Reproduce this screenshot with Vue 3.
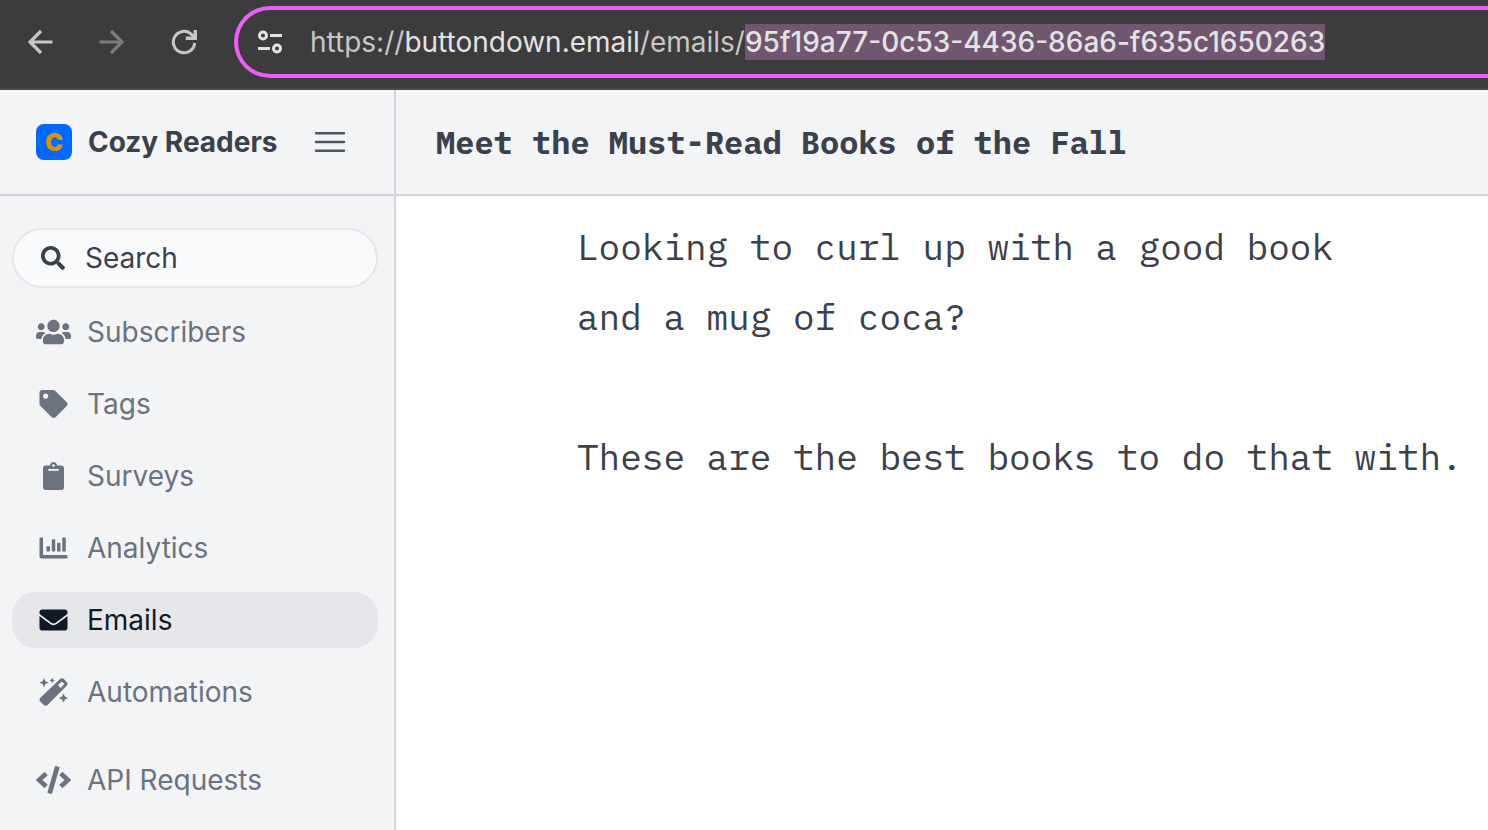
<script setup>
const icons = {
  users: {
    w: 640,
    h: 512,
    d: 'M96 224c35.3 0 64-28.7 64-64s-28.7-64-64-64-64 28.7-64 64 28.7 64 64 64zm448 0c35.3 0 64-28.7 64-64s-28.7-64-64-64-64 28.7-64 64 28.7 64 64 64zm32 32h-64c-17.6 0-33.5 7.1-45.1 18.6 40.3 22.1 68.9 62 75.1 109.4h66c17.7 0 32-14.3 32-32v-32c0-35.3-28.7-64-64-64zm-256 0c61.9 0 112-50.1 112-112S381.9 32 320 32 208 82.1 208 144s50.1 112 112 112zm76.8 32h-8.3c-20.8 10-43.9 16-68.5 16s-47.6-6-68.5-16h-8.3C179.6 288 128 339.6 128 403.2V432c0 26.5 21.5 48 48 48h288c26.5 0 48-21.5 48-48v-28.8c0-63.6-51.6-115.2-115.2-115.2zm-223.7-13.4C161.5 263.1 145.6 256 128 256H64c-35.3 0-64 28.7-64 64v32c0 17.7 14.3 32 32 32h65.9c6.3-47.4 34.9-87.3 75.2-109.4z',
  },
  tag: {
    w: 512,
    h: 512,
    d: 'M0 252.118V48C0 21.49 21.49 0 48 0h204.118a48 48 0 0 1 33.941 14.059l211.882 211.882c18.745 18.745 18.745 49.137 0 67.882L293.823 497.941c-18.745 18.745-49.137 18.745-67.882 0L14.059 286.059A48 48 0 0 1 0 252.118zM112 64c-26.51 0-48 21.49-48 48s21.49 48 48 48 48-21.49 48-48-21.49-48-48-48z',
  },
  clipboard: {
    w: 384,
    h: 512,
    d: 'M384 112v352c0 26.5-21.5 48-48 48H48c-26.5 0-48-21.5-48-48V112c0-26.5 21.5-48 48-48h80c0-35.3 28.7-64 64-64s64 28.7 64 64h80c26.5 0 48 21.5 48 48zM192 40c-13.3 0-24 10.7-24 24s10.7 24 24 24 24-10.7 24-24-10.7-24-24-24m96 114v-20a6 6 0 0 0-6-6H102a6 6 0 0 0-6 6v20a6 6 0 0 0 6 6h180a6 6 0 0 0 6-6z',
  },
  chart: {
    w: 512,
    h: 512,
    d: 'M332.8 320h38.4c6.4 0 12.8-6.4 12.8-12.8V172.8c0-6.4-6.4-12.8-12.8-12.8h-38.4c-6.4 0-12.8 6.4-12.8 12.8v134.4c0 6.4 6.4 12.8 12.8 12.8zm96 0h38.4c6.4 0 12.8-6.4 12.8-12.8V76.8c0-6.4-6.4-12.8-12.8-12.8h-38.4c-6.4 0-12.8 6.4-12.8 12.8v230.4c0 6.4 6.4 12.8 12.8 12.8zm-288 0h38.4c6.4 0 12.8-6.4 12.8-12.8v-70.4c0-6.4-6.4-12.8-12.8-12.8h-38.4c-6.4 0-12.8 6.4-12.8 12.8v70.4c0 6.4 6.4 12.8 12.8 12.8zm96 0h38.4c6.4 0 12.8-6.4 12.8-12.8V108.8c0-6.4-6.4-12.8-12.8-12.8h-38.4c-6.4 0-12.8 6.4-12.8 12.8v198.4c0 6.4 6.4 12.8 12.8 12.8zM496 384H64V80c0-8.84-7.16-16-16-16H16C7.16 64 0 71.16 0 80v336c0 17.67 14.33 32 32 32h464c8.84 0 16-7.16 16-16v-32c0-8.84-7.16-16-16-16z',
  },
  envelope: {
    w: 512,
    h: 512,
    d: 'M502.3 190.8c3.9-3.1 9.7-.2 9.7 4.7V400c0 26.5-21.5 48-48 48H48c-26.5 0-48-21.5-48-48V195.6c0-5 5.7-7.8 9.7-4.7 22.4 17.4 52.1 39.5 154.1 113.6 21.1 15.4 56.7 47.8 92.2 47.6 35.7.3 72-32.8 92.3-47.6 102-74.1 131.6-96.3 154-113.7zM256 320c23.2.4 56.6-29.2 73.4-41.4 132.7-96.3 142.8-104.7 173.4-128.7 5.8-4.5 9.2-11.5 9.2-18.9v-19c0-26.5-21.5-48-48-48H48c-26.5 0-48 21.5-48 48v19c0 7.4 3.4 14.3 9.2 18.9 30.6 23.9 40.7 32.4 173.4 128.7 16.8 12.2 50.2 41.8 73.4 41.4z',
  },
  magic: {
    w: 28,
    h: 28,
    d: 'M20.4 1.3Q22.5-.8 24.6 1.3L27 3.7Q29.1 5.8 27 7.9L8.2 26.7Q6.1 28.8 4 26.7L1.1 23.8Q-1 21.700 1.100 19.600ZM22.300 3.400L18.400 7.300 21.100 10 25 6.100ZM4.500.1l1.400 3.200 3.200 1.400-3.200 1.400-1.400 3.200-1.400-3.200-3.200-1.400 3.200-1.400zM12.700-.4l.9 1.900 1.900.9-1.900.9-.9 1.900-.9-1.900-1.900-.9 1.900-.9zM24 15.400l1.400 3.200 3.200 1.400-3.200 1.400-1.400 3.200-1.400-3.200-3.200-1.400 3.200-1.400z',
  },
  code: {
    w: 640,
    h: 512,
    d: 'M278.9 511.5l-61-17.7c-6.4-1.8-10-8.5-8.2-14.9L346.2 8.7c1.8-6.4 8.5-10 14.9-8.2l61 17.7c6.4 1.8 10 8.5 8.2 14.9L293.8 503.3c-1.9 6.4-8.5 10.1-14.9 8.2zm-114-112.2l43.5-46.4c4.6-4.9 4.3-12.7-.8-17.2L117 256l90.6-79.7c5.1-4.5 5.5-12.3.8-17.2l-43.5-46.4c-4.5-4.8-12.1-5.1-17-.5L3.8 247.2c-5.1 4.7-5.1 12.8 0 17.5l144.1 135.1c4.9 4.6 12.5 4.4 17-.5zm327.2.6l144.1-135.1c5.1-4.7 5.1-12.8 0-17.5L492.1 112.1c-4.8-4.5-12.4-4.3-17 .5L431.6 159c-4.6 4.9-4.3 12.7.8 17.2L523 256l-90.6 79.7c-5.1 4.5-5.5 12.3-.8 17.2l43.5 46.4c4.5 4.9 12.1 5.1 17 .6z',
  },
}

const groups = [
  [
    { label: 'Subscribers', icon: 'users' },
    { label: 'Tags', icon: 'tag' },
    { label: 'Surveys', icon: 'clipboard' },
    { label: 'Analytics', icon: 'chart' },
    { label: 'Emails', icon: 'envelope', active: true },
    { label: 'Automations', icon: 'magic' },
  ],
  [{ label: 'API Requests', icon: 'code' }],
]
</script>

<template>
  <div class="window">
    <header class="toolbar">
      <div class="controls">
        <button type="button" class="tool" aria-label="Back">
          <svg width="28" height="28" viewBox="0 0 28 28" fill="none" stroke="currentColor" stroke-width="3.200">
            <path d="M26.500 14H4M15 3 4 14l11 11" />
          </svg>
        </button>
        <button type="button" class="tool" aria-label="Forward" disabled>
          <svg width="28" height="28" viewBox="0 0 28 28" fill="none" stroke="currentColor" stroke-width="3.200">
            <path d="M1.500 14H24M13 3l11 11-11 11" />
          </svg>
        </button>
        <button type="button" class="tool" aria-label="Reload">
          <svg width="28" height="28" viewBox="0 0 28 28" fill="none" stroke="currentColor" stroke-width="3">
            <path d="M24.700 15A10.700 10.700 0 1 1 21.500 6.400L25 10" />
            <path d="M25.300 2V10.200H15.800" stroke-width="3.400" />
          </svg>
        </button>
      </div>
      <div class="address">
        <button type="button" class="tool site" aria-label="View site information">
          <svg width="28" height="28" viewBox="0 0 28 28" fill="none" stroke="currentColor" stroke-width="3">
            <circle cx="7" cy="7.500" r="3.500" />
            <circle cx="21" cy="20.500" r="3.500" />
            <path d="M14 7.500h12M2 20.500h12" />
          </svg>
        </button>
        <div class="url" role="textbox" aria-label="Address" tabindex="0">https://<span class="host">buttondown.email</span>/emails/<mark>95f19a77-0c53-4436-86a6-f635c1650263</mark></div>
      </div>
    </header>

    <div class="app">
      <aside class="sidebar">
        <div class="brand">
          <span class="logo" aria-hidden="true">C</span>
          <span class="name">Cozy Readers</span>
          <button type="button" class="menu" aria-label="Menu">
            <svg width="32" height="24" viewBox="0 0 32 24" fill="none" stroke="currentColor" stroke-width="2.400" stroke-linecap="round">
              <path d="M2 3.200h28M2 12h28M2 20.800h28" />
            </svg>
          </button>
        </div>
        <div class="side-body">
          <label class="search">
            <svg class="glass" viewBox="0 0 512 512" fill="currentColor" aria-hidden="true">
              <path d="M505 442.700L405.300 343c-4.500-4.500-10.600-7-17-7H372c27.600-35.300 44-79.700 44-128C416 93.100 322.900 0 208 0S0 93.100 0 208s93.100 208 208 208c48.300 0 92.700-16.400 128-44v16.300c0 6.400 2.500 12.500 7 17l99.700 99.700c9.400 9.400 24.600 9.400 33.900 0l28.300-28.300c9.400-9.400 9.400-24.600.1-34zM208 336c-70.700 0-128-57.200-128-128 0-70.700 57.200-128 128-128 70.700 0 128 57.200 128 128 0 70.700-57.200 128-128 128z" />
            </svg>
            <input type="text" placeholder="Search" aria-label="Search" />
          </label>
          <nav class="nav">
            <ul v-for="(group, i) in groups" :key="i">
              <li v-for="item in group" :key="item.label">
                <a href="#" :class="{ active: item.active }">
                  <svg class="icon" :viewBox="`0 0 ${icons[item.icon].w} ${icons[item.icon].h}`" fill="currentColor" fill-rule="evenodd" aria-hidden="true">
                    <path :d="icons[item.icon].d" />
                  </svg>
                  <span>{{ item.label }}</span>
                </a>
              </li>
            </ul>
          </nav>
        </div>
      </aside>

      <main class="editor">
        <h1>Meet the Must-Read Books of the Fall</h1>
        <div class="content">
          <p>Looking to curl up with a good book<br />and a mug of coca?</p>
          <p>These are the best books to do that with.</p>
        </div>
      </main>
    </div>
  </div>
</template>

<style>
body {
  margin: 0;
}
</style>

<style scoped>
* {
  box-sizing: border-box;
}
.window {
  display: flex;
  flex-direction: column;
  min-height: 100vh;
  overflow: hidden;
  font-family: Inter, "Liberation Sans", sans-serif;
  font-size: 28px;
  background: #fff;
}
button {
  display: flex;
  padding: 0;
  border: 0;
  background: none;
  color: inherit;
  font: inherit;
}
.toolbar {
  display: flex;
  align-items: center;
  height: 90px;
  padding: 0 0 4px 26px;
  border-bottom: 2px solid #4a4848;
  background: #3c3c3c;
  color: #c7c7c7;
}
.controls {
  display: flex;
  gap: 44px;
  width: 208px;
}
.tool:disabled {
  color: #7b7b7b;
}
.address {
  flex: 1;
  display: flex;
  align-items: center;
  gap: 26px;
  height: 72px;
  padding-left: 18px;
  border: 4px solid #ed5ef8;
  border-right: 0;
  border-radius: 36px 0 0 36px;
}
.site {
  color: #e3e3e3;
}
.url {
  line-height: 36px;
  white-space: nowrap;
  outline: none;
}
.host {
  color: #e3e3e3;
}
.url mark {
  display: inline-block;
  background: #70566f;
  color: #e3e3e3;
  font-weight: 500;
}
.app {
  flex: 1;
  display: flex;
}
.sidebar {
  flex: none;
  width: 396px;
  border-right: 2px solid #d1d5db;
  background: #f3f4f6;
  color: #3a414c;
}
.brand {
  display: flex;
  align-items: center;
  height: 106px;
  padding: 0 48px 0 36px;
  border-bottom: 2px solid #d1d5db;
}
.logo {
  display: flex;
  align-items: center;
  justify-content: center;
  width: 36px;
  height: 36px;
  margin-right: 16px;
  border-radius: 8px;
  background: #0069ff;
  color: #dd9200;
  font-size: 24px;
  font-weight: 900;
}
.name {
  flex: 1;
  font-weight: 700;
  white-space: nowrap;
}
.menu {
  color: #4b5563;
}
.side-body {
  padding: 32px 16px 16px 12px;
}
.search {
  display: flex;
  align-items: center;
  height: 60px;
  margin-bottom: 16px;
  padding: 0 24px 0 27px;
  border: 2px solid #e5e7eb;
  border-radius: 30px;
  background: #f9fafb;
}
.glass {
  flex: none;
  width: 24px;
  height: 24px;
  margin-right: 20px;
}
.search input {
  flex: 1;
  min-width: 0;
  padding: 0;
  border: 0;
  outline: none;
  background: none;
  color: inherit;
  font: inherit;
}
.search input::placeholder {
  color: #3a414c;
  opacity: 1;
}
.nav {
  display: flex;
  flex-direction: column;
  gap: 32px;
}
.nav ul {
  display: flex;
  flex-direction: column;
  gap: 16px;
  margin: 0;
  padding: 0;
  list-style: none;
}
.nav a {
  display: flex;
  align-items: center;
  gap: 16px;
  height: 56px;
  padding: 0 24px;
  border-radius: 24px;
  color: #6b7280;
  text-decoration: none;
}
.nav a.active {
  background: #e5e7eb;
  color: #111827;
}
.icon {
  flex: none;
  width: 35px;
  height: 28px;
}
.editor {
  flex: 1;
  min-width: 0;
  color: #3a414c;
  font-family: "IBM Plex Mono", "Liberation Mono", monospace;
}
h1 {
  height: 106px;
  margin: 0;
  padding: 0 40px;
  border-bottom: 2px solid #d1d5db;
  background: #f3f4f6;
  font-size: 32px;
  font-weight: 700;
  line-height: 104px;
  white-space: nowrap;
}
.content {
  padding: 16px 0 0 181px;
  font-size: 36px;
  line-height: 70px;
  white-space: nowrap;
}
.content p {
  margin: 0 0 70px;
}
</style>
